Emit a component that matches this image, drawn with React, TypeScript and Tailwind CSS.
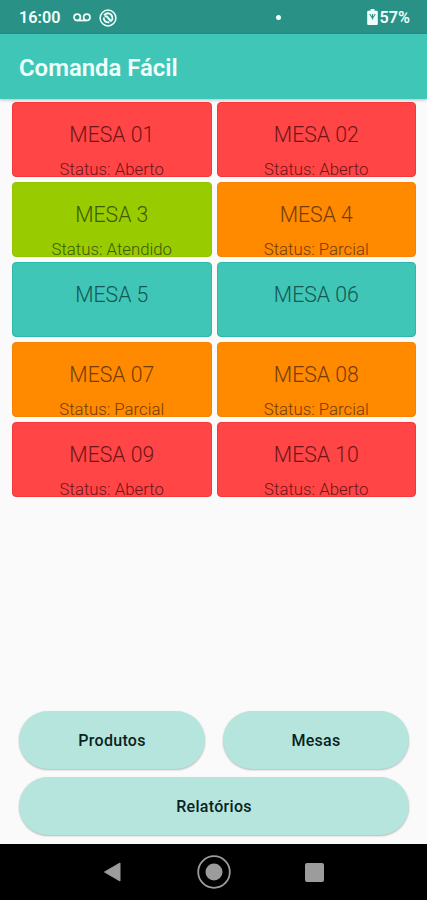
type Status = "Aberto" | "Atendido" | "Parcial" | "Livre";

const mesas: { name: string; status: Status }[] = [
  { name: "MESA 01", status: "Aberto" },
  { name: "MESA 02", status: "Aberto" },
  { name: "MESA 3", status: "Atendido" },
  { name: "MESA 4", status: "Parcial" },
  { name: "MESA 5", status: "Livre" },
  { name: "MESA 06", status: "Livre" },
  { name: "MESA 07", status: "Parcial" },
  { name: "MESA 08", status: "Parcial" },
  { name: "MESA 09", status: "Aberto" },
  { name: "MESA 10", status: "Aberto" },
];

const colors: Record<Status, string> = {
  Aberto: "bg-[#ff4545] border-[#f5363a] text-[#701519]",
  Atendido: "bg-[#99cc00] border-[#94c500] text-[#3f5a04]",
  Parcial: "bg-[#ff8a00] border-[#f98200] text-[#743c06]",
  Livre: "bg-[#40c6b6] border-[#2bbaa9] text-[#155752]",
};

function StatusBar() {
  return (
    <div className="flex h-[34px] items-center bg-[#2a9187] pl-[19px] pr-[17px] pt-px text-[#effffc]">
      <span className="w-[54px] pt-px text-[16.2px] font-semibold leading-none">16:00</span>
      {/* correio de voz */}
      <svg className="h-[9px] w-[18px]" viewBox="0 0 18 9" fill="none" stroke="currentColor" strokeWidth="1.7">
        <circle cx="4.2" cy="4.3" r="3.2" />
        <circle cx="13.8" cy="4.3" r="3.2" />
        <path d="M4.2 7.5h9.6" />
      </svg>
      <svg className="ml-[8px] h-[18px] w-[18px]" viewBox="0 0 18 18" fill="none" stroke="currentColor">
        <circle cx="9" cy="9" r="7.9" strokeWidth="1.5" />
        <path d="M5 6.2Q8.6 2.6 12.3 5.7Q14.4 8.6 12.6 11.6" strokeWidth="1.8" />
        <path d="M4.7 8.5Q4.6 13.6 10.4 13.3" strokeWidth="1.8" />
        <path d="M5.6 7.4Q8.2 7 9.4 9.2T12.8 12.3" strokeWidth="2" />
      </svg>
      <span className="ml-[159px] h-[5px] w-[5px] rounded-full bg-current" />
      <div className="ml-auto flex items-center gap-[2px]">
        <svg className="h-[16px] w-[11px]" viewBox="0 0 11 16">
          <path d="M3.5 0h4v1.7h2.3q1 0 1 1V15q0 1-1 1H1.2q-1 0-1-1V2.7q0-1 1-1h2.3z" fill="currentColor" />
          <path d="M2.7 5l2.8 4.2L8.3 5M5.5 5v5.5" stroke="#2a9187" strokeWidth="1.1" fill="none" />
        </svg>
        <span className="pt-px text-[16.2px] font-semibold leading-none">57%</span>
      </div>
    </div>
  );
}

function MesaCard({ name, status }: { name: string; status: Status }) {
  return (
    <div className={`h-[75px] overflow-hidden rounded-[4px] border text-center font-light ${colors[status]}`}>
      <div className="mt-[18px] text-[21.2px] leading-[28px]">{name}</div>
      {status !== "Livre" && (
        <div className="mt-[14px] text-[16.8px] leading-[13px]">Status: {status}</div>
      )}
    </div>
  );
}

function PillButton({ label }: { label: string }) {
  return (
    <button className="h-[58px] w-full rounded-full bg-[#b5e5dd] pt-[2px] text-[16px] font-medium tracking-[0.3px] text-[#0b1f1e] shadow-[0_1px_2px_rgba(0,0,0,0.28)]">
      {label}
    </button>
  );
}

export default function App() {
  return (
    <div className="flex h-[900px] w-[427px] flex-col overflow-hidden bg-[#fafafa] font-[Roboto,sans-serif]">
      <StatusBar />
      <header className="flex h-[65px] items-center bg-[#40c6b6] px-[19px] pt-[4px] shadow-[0_1px_3px_rgba(0,0,0,0.25)]">
        <h1 className="text-[23.9px] font-semibold text-[#f0fffc]">Comanda Fácil</h1>
      </header>

      <main className="grid grid-cols-2 gap-[5px] pl-[12px] pr-[11px] pt-[3px]">
        {mesas.map((mesa) => (
          <MesaCard key={mesa.name} {...mesa} />
        ))}
      </main>

      <div className="mt-auto grid grid-cols-2 gap-x-[18px] gap-y-2 pb-[9px] pl-[19px] pr-[18px]">
        <PillButton label="Produtos" />
        <PillButton label="Mesas" />
        <div className="col-span-2">
          <PillButton label="Relatórios" />
        </div>
      </div>

      {/* barra de navegação */}
      <nav className="flex h-[56px] items-center bg-black pl-[103px] text-[#9c9c9c]">
        <svg className="h-[20px] w-[18px]" viewBox="0 0 18 20">
          <path d="M1.5 10L17 1v18z" fill="currentColor" stroke="currentColor" strokeLinejoin="round" />
        </svg>
        <svg className="ml-[76px] h-[34px] w-[34px]" viewBox="0 0 34 34">
          <circle cx="17" cy="17" r="15.8" fill="none" stroke="currentColor" strokeWidth="1.8" />
          <circle cx="17" cy="17" r="8.5" fill="currentColor" />
        </svg>
        <div className="ml-[74px] h-[19px] w-[19px] rounded-[2px] bg-current" />
      </nav>
    </div>
  );
}
